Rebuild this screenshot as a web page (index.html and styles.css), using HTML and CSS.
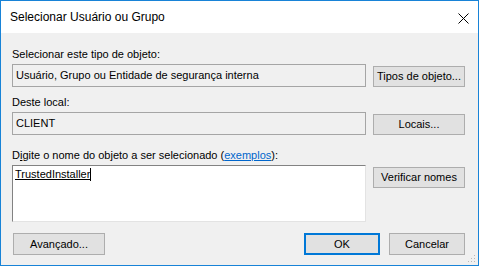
FILE: index.html
```html
<!DOCTYPE html>
<html lang="pt-BR">
<head>
    <meta charset="UTF-8">
    <title>Selecionar Usuário ou Grupo</title>
    <link rel="stylesheet" href="styles.css">
</head>
<body>
    <div class="window">
        <div class="titlebar">
            <span class="title">Selecionar Usuário ou Grupo</span>
            <svg class="close" width="11" height="11" viewBox="0 0 11 11">
                <path d="M0.5 0.5L10.5 10.5M10.5 0.5L0.5 10.5" stroke="#000" stroke-width="1"/>
            </svg>
        </div>
        <div class="content">
            <div class="label">Selecionar este tipo de objeto:</div>
            <div class="row">
                <div class="field">Usuário, Grupo ou Entidade de segurança interna</div>
                <div class="btn btn_side">Tipos de objeto...</div>
            </div>

            <div class="label label_local">Deste local:</div>
            <div class="row">
                <div class="field">CLIENT</div>
                <div class="btn btn_side">Locais...</div>
            </div>

            <div class="label label_names">D<u>i</u>gite o nome do objeto a ser selecionado (<a href="#">exemplos</a>):</div>
            <div class="row row_top">
                <div class="names"><span class="resolved">TrustedInstaller</span><span class="caret"></span></div>
                <div class="btn btn_side btn_check">Verificar nomes</div>
            </div>

            <div class="footer">
                <div class="btn btn_wide">Avançado...</div>
                <div class="actions">
                    <div class="btn btn_ok">OK</div>
                    <div class="btn">Cancelar</div>
                </div>
            </div>

            <!-- alça de redimensionar -->
            <svg class="grip" width="8" height="8" viewBox="0 0 8 8">
                <rect x="6" y="0" width="1" height="1" fill="#b8b8b8"/>
                <rect x="3" y="3" width="1" height="1" fill="#b8b8b8"/>
                <rect x="6" y="3" width="1" height="1" fill="#b8b8b8"/>
                <rect x="0" y="6" width="1" height="1" fill="#b8b8b8"/>
                <rect x="3" y="6" width="1" height="1" fill="#b8b8b8"/>
                <rect x="6" y="6" width="1" height="1" fill="#b8b8b8"/>
            </svg>
        </div>
    </div>
</body>
</html>
```

FILE: styles.css
```css
html{
    font-family: "Liberation Sans", Arial, sans-serif;
}
body{margin: 0;padding: 0;background: #fff;}

.window{
    width: 477px;
    border: 1px solid #1883d7;
    background: #f0f0f0;
}
.titlebar{
    height: 32px;
    background: #fff;
    display: flex;
    align-items: center;
    justify-content: space-between;
    padding: 0 9px 0 9px;
}
.titlebar .title{
    font-size: 12px;
    color: #000;
}
.titlebar .close{
    display: block;
    margin-top: 3px;
    margin-right: 0;
}

.content{
    position: relative;
    padding: 13px 13px 10px 11px;
    font-size: 11px;
    color: #000;
}
.label{
    height: 16px;
    line-height: 16px;
    margin-bottom: 2px;
}
.label_local{
    margin-top: 7px;
}
.label_names{
    margin-top: 12px;
}
.label a{
    color: #0066cc;
}

.row{
    display: flex;
    gap: 7px;
    height: 23px;
}
.field{
    flex: 1;
    box-sizing: border-box;
    border: 1px solid #a5a5a5;
    padding: 0 3px;
    line-height: 21px;
    white-space: nowrap;
}

.btn{
    box-sizing: border-box;
    width: 76px;
    height: 22px;
    line-height: 20px;
    text-align: center;
    background: #e1e1e1;
    border: 1px solid #adadad;
    white-space: nowrap;
}
.btn_side{
    width: 92px;
    height: 21px;
    line-height: 19px;
    align-self: flex-end;
}
.row_top{
    height: 57px;
}
.row_top .btn_check{
    align-self: flex-start;
    margin-top: 2px;
}
.names{
    flex: 1;
    box-sizing: border-box;
    background: #fff;
    border: 1px solid #e3e3e3;
    border-top-color: #828282;
    border-left-color: #828282;
    padding: 2px 2px;
    line-height: 13px;
}
.names .resolved{
    text-decoration: underline;
}
.names .caret{
    display: inline-block;
    width: 1px;
    height: 13px;
    background: #000;
    vertical-align: top;
}

.footer{
    display: flex;
    justify-content: space-between;
    margin-top: 11px;
}
.btn_wide{
    width: 92px;
    margin-left: 1px;
}
.actions{
    display: flex;
    gap: 9px;
}
.btn_ok{
    border: 2px solid #0078d7;
    line-height: 18px;
}

.grip{
    position: absolute;
    right: 2px;
    bottom: 2px;
}
```
